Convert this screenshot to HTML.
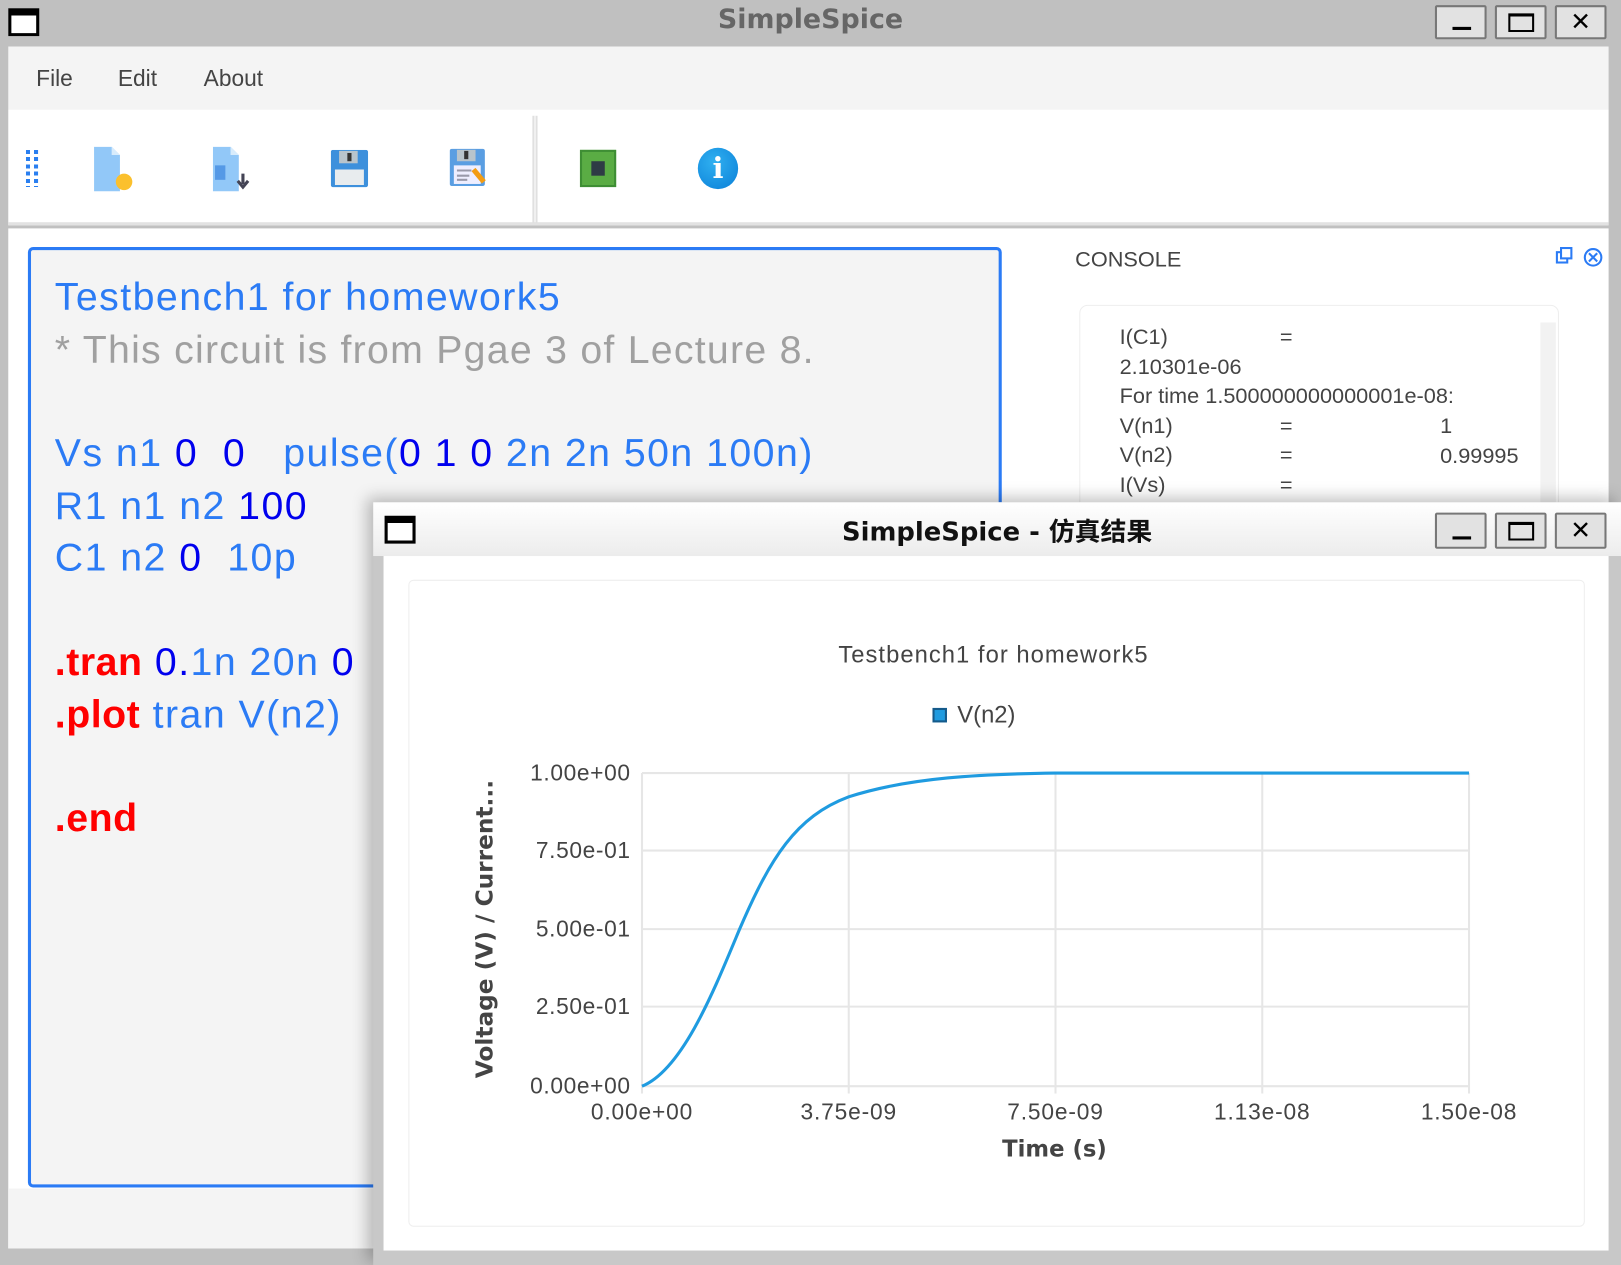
<!DOCTYPE html>
<html><head><meta charset="utf-8"><style>
*{margin:0;padding:0;box-sizing:border-box}
html,body{width:1621px;height:1265px;overflow:hidden;background:#c0c0c0;font-family:"Liberation Sans","Noto Sans CJK SC",sans-serif}
#w{position:absolute;left:0;top:0;width:1568px;height:1224px;transform:scale(1.0338,1.0335);transform-origin:0 0;background:#c0c0c0}
.a{position:absolute}
.btn{position:absolute;width:50px;height:33px;background:#e2e2e2;border:2px solid #777;border-radius:2px}
.ed{font-size:38px;letter-spacing:1.4px;white-space:pre;color:#2b7bf5;position:absolute;left:53px}
.d{color:#0000ee}.r{color:#f00;font-weight:bold;letter-spacing:0.5px}
.cl{position:absolute;font-size:21px;color:#444;white-space:pre}
.yl{position:absolute;right:958px;font-size:22px;letter-spacing:0.6px;color:#444;text-align:right}
.xl{position:absolute;font-size:22px;letter-spacing:0.8px;color:#444;width:160px;text-align:center;top:1063px}
</style></head><body><div id="w">
<div class="a" style="left:8px;top:8px;width:30px;height:27px;border:3px solid #000;border-top-width:7px;background:#fff"></div>
<div class="a" style="left:0;width:1568px;top:4px;text-align:center;font:bold 26px 'DejaVu Sans',sans-serif;color:#666">SimpleSpice</div>
<div class="btn" style="left:1388px;top:5px"><div class="a" style="left:15px;top:19px;width:18px;height:3px;background:#000"></div></div>
<div class="btn" style="left:1446px;top:5px"><div class="a" style="left:11px;top:6px;width:25px;height:18px;border:2px solid #000;border-top-width:3px"></div></div>
<div class="btn" style="left:1504px;top:5px;font:bold 24px 'DejaVu Sans';text-align:center;line-height:29px">✕</div>
<div class="a" style="left:8px;top:45px;width:1548px;height:61px;background:#f4f4f4"></div>
<div class="a" style="left:35px;top:63px;font-size:22px;color:#444">File</div>
<div class="a" style="left:114px;top:63px;font-size:22px;color:#444">Edit</div>
<div class="a" style="left:197px;top:63px;font-size:22px;color:#444">About</div>
<div class="a" style="left:8px;top:106px;width:1548px;height:112px;background:#fff;border-bottom:3px solid #e2e2e2"></div>
<div class="a" style="left:25px;top:145px;width:12px;height:36px;background:repeating-linear-gradient(#2a7ff0 0 4px,transparent 4px 7px);-webkit-mask:linear-gradient(90deg,#000 0 4px,transparent 4px 8px,#000 8px)"></div>
<svg class="a" style="left:88px;top:142px" width="45" height="45"><path d="M3 0h17l8 8v35H3z" fill="#92c8f8"/><path d="M20 0v8h8z" fill="#d8ecfc"/><circle cx="32" cy="34" r="8" fill="#fbc02d"/></svg>
<svg class="a" style="left:203px;top:142px" width="45" height="45"><path d="M3 0h17l8 8v35H3z" fill="#92c8f8"/><path d="M20 0v8h8z" fill="#d8ecfc"/><rect x="5" y="18" width="10" height="14" fill="#5599e6"/><path d="M32 26v10M27 33l5 6 5-6" stroke="#445" stroke-width="3" fill="none"/></svg>
<svg class="a" style="left:320px;top:145px" width="40" height="40"><rect x="0" y="0" width="36" height="36" rx="2" fill="#3d90dc"/><rect x="8" y="1" width="18" height="12" fill="#b8c4cc"/><rect x="16" y="3" width="4" height="8" fill="#333"/><rect x="4" y="19" width="28" height="15" fill="#e8ecee"/></svg>
<svg class="a" style="left:435px;top:142px" width="42" height="42"><rect x="0" y="2" width="34" height="36" rx="2" fill="#5a9ee2"/><rect x="7" y="3" width="18" height="11" fill="#b8c4cc"/><rect x="14" y="4" width="4" height="8" fill="#333"/><rect x="4" y="18" width="26" height="18" fill="#eef"/><path d="M7 23h14M7 28h12M7 32h10" stroke="#99a" stroke-width="2"/><path d="M23 22l10 12" stroke="#f39c12" stroke-width="5"/></svg>
<div class="a" style="left:515px;top:112px;width:5px;height:104px;border-left:2px solid #e0e0e0;border-right:2px solid #e0e0e0"></div>
<div class="a" style="left:561px;top:145px;width:35px;height:36px;background:#5aac44;border:2px solid #3e8e34"><div class="a" style="left:9px;top:9px;width:13px;height:14px;background:#2e3b45"></div></div>
<div class="a" style="left:675px;top:143px;width:39px;height:40px;border-radius:50%;background:radial-gradient(circle at 40% 35%,#30b0f0,#0a7fd8);color:#fff;font:bold 28px 'DejaVu Serif',serif;text-align:center;line-height:40px">i</div>
<div class="a" style="left:8px;top:221px;width:1548px;height:987px;background:#fff"></div>
<div class="a" style="left:8px;top:1150px;width:360px;height:58px;background:#f4f4f4"></div>
<div class="a" style="left:27px;top:239px;width:942px;height:910px;border:3px solid #2b7bf5;border-radius:5px;background:#f4f4f4"></div>
<div class="ed" style="top:267px">Testbench1 for homework5</div>
<div class="ed" style="top:318px;color:#a0a0a0;letter-spacing:1.2px">* This circuit is from Pgae 3 of Lecture 8.</div>
<div class="ed" style="top:418px">Vs n1 <span class="d">0  0</span>   pulse(<span class="d">0 1 0</span> 2n 2n 50n 100n)</div>
<div class="ed" style="top:469px">R1 n1 n2 <span class="d">100</span></div>
<div class="ed" style="top:519px">C1 n2 <span class="d">0</span>  10p</div>
<div class="ed" style="top:620px"><span class="r">.tran</span> <span class="d">0.</span>1n 20n <span class="d">0</span></div>
<div class="ed" style="top:671px"><span class="r">.plot</span> tran V(n2)</div>
<div class="ed" style="top:771px"><span class="r">.end</span></div>
<div class="a" style="left:1040px;top:240px;font-size:21px;color:#444">CONSOLE</div>
<svg class="a" style="left:1504px;top:238px" width="48" height="22"><rect x="2" y="6" width="10" height="10" fill="none" stroke="#2b7bf5" stroke-width="2"/><rect x="6" y="2" width="10" height="10" fill="#fff" stroke="#2b7bf5" stroke-width="2"/><circle cx="37" cy="11" r="8" fill="none" stroke="#2b7bf5" stroke-width="2"/><path d="M33 7l8 8M41 7l-8 8" stroke="#2b7bf5" stroke-width="2"/></svg>
<div class="a" style="left:1044px;top:295px;width:464px;height:220px;border:1px solid #eee;border-radius:8px"></div>
<div class="a" style="left:1490px;top:312px;width:15px;height:200px;background:#f2f2f2"></div>
<div class="cl" style="left:1083px;top:313px;line-height:28.6px">I(C1)
2.10301e-06
For time 1.500000000000001e-08:
V(n1)
V(n2)
I(Vs)</div>
<div class="cl" style="left:1238px;top:313px;line-height:28.6px">=


=
=
=</div>
<div class="cl" style="left:1393px;top:399px;line-height:28.6px">1
0.99995</div>
<div class="a" style="left:361px;top:486px;width:1207px;height:738px;background:#c8c8c8;box-shadow:-6px -4px 14px rgba(0,0,0,.25)"></div>
<div class="a" style="left:361px;top:486px;width:1207px;height:52px;background:linear-gradient(#fff,#ececec)"></div>
<div class="a" style="left:372px;top:499px;width:30px;height:27px;border:3px solid #000;border-top-width:7px;background:#fff"></div>
<div class="a" style="left:361px;width:1207px;top:495px;text-align:center;font:bold 25px 'DejaVu Sans','Noto Sans CJK SC',sans-serif;color:#111;padding-left:0">SimpleSpice - 仿真结果</div>
<div class="btn" style="left:1388px;top:496px;height:35px"><div class="a" style="left:15px;top:21px;width:18px;height:3px;background:#000"></div></div>
<div class="btn" style="left:1446px;top:496px;height:35px"><div class="a" style="left:11px;top:7px;width:25px;height:18px;border:2px solid #000;border-top-width:3px"></div></div>
<div class="btn" style="left:1504px;top:496px;height:35px;font:bold 24px 'DejaVu Sans';text-align:center;line-height:31px">✕</div>
<div class="a" style="left:371px;top:538px;width:1185px;height:672px;background:#fff"></div>
<div class="a" style="left:395px;top:561px;width:1138px;height:626px;border:1px solid #eee;border-radius:5px"></div>
<div class="a" style="left:395px;width:1138px;top:620px;text-align:center;font-size:23px;letter-spacing:1px;color:#444;padding-right:6px">Testbench1 for homework5</div>
<div class="a" style="left:902px;top:685px;width:14px;height:14px;background:#1f9be0;border:2px solid #155a8a"></div>
<div class="a" style="left:926px;top:678px;font-size:23px;color:#444">V(n2)</div>
<svg class="a" style="left:0;top:0" width="1568" height="1224">
<g stroke="#e6e6e6" stroke-width="2">
<path d="M621 748H1421M621 823H1421M621 899H1421M621 974H1421M621 1051H1421"/>
<path d="M621 748V1058M821 748V1058M1021 748V1058M1221 748V1058M1421 748V1058"/>
</g>
<path d="M621 1051C660 1035 690 960 715 900C745 830 770 790 821 771C880 752 950 749 1021 748L1421 748" fill="none" stroke="#1f9be0" stroke-width="3"/>
<text x="470" y="899" transform="rotate(-90 470 899)" text-anchor="middle" dominant-baseline="middle" font-family="DejaVu Sans,sans-serif" font-weight="bold" font-size="22.5" fill="#444">Voltage (V) / Current...</text>
</svg>
<div class="yl" style="top:735px">1.00e+00</div>
<div class="yl" style="top:810px">7.50e-01</div>
<div class="yl" style="top:886px">5.00e-01</div>
<div class="yl" style="top:961px">2.50e-01</div>
<div class="yl" style="top:1038px">0.00e+00</div>
<div class="xl" style="left:541px">0.00e+00</div>
<div class="xl" style="left:741px">3.75e-09</div>
<div class="xl" style="left:941px">7.50e-09</div>
<div class="xl" style="left:1141px">1.13e-08</div>
<div class="xl" style="left:1341px">1.50e-08</div>
<div class="a" style="left:920px;width:200px;top:1100px;text-align:center;font:bold 22px 'DejaVu Sans',sans-serif;color:#444">Time (s)</div>
</div></body></html>
